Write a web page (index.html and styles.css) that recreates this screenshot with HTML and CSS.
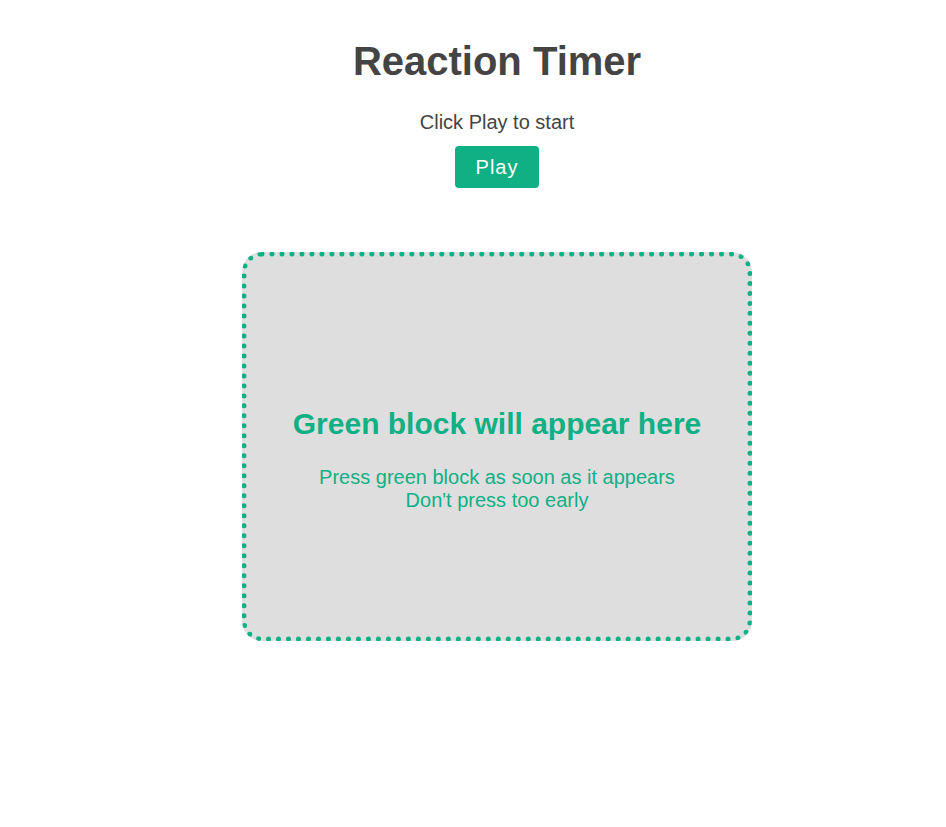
FILE: index.html
```html
<!DOCTYPE html>
<html lang="en">
<head>
<meta charset="utf-8">
<title>Reaction Timer</title>
<link rel="stylesheet" href="styles.css">
</head>
<body>
<main class="app">
  <h1 class="title">Reaction Timer</h1>
  <p class="hint">Click Play to start</p>
  <button class="play-btn" type="button">Play</button>
  <section class="arena">
    <h2 class="arena-title">Green block will appear here</h2>
    <p class="arena-text">Press green block as soon as it appears<br>Don't press too early</p>
  </section>
</main>
</body>
</html>
```

FILE: styles.css
```css
html, body {
  margin: 0;
  padding: 0;
  background: #ffffff;
}

body {
  font-family: "Liberation Sans", Arial, Helvetica, sans-serif;
  color: #444444;
}

.app {
  display: flex;
  flex-direction: column;
  align-items: center;
  padding-left: 48px;
  padding-top: 38px;
}

.title {
  margin: 0;
  font-size: 40px;
  font-weight: bold;
  line-height: 46px;
  color: #444444;
}

.hint {
  margin: 27px 0 12px;
  font-size: 20px;
  line-height: 23px;
}

.play-btn {
  font-family: "Liberation Sans", Arial, Helvetica, sans-serif;
  font-size: 20px;
  line-height: 22px;
  letter-spacing: 1px;
  color: #ffffff;
  background: #0fb084;
  border: none;
  border-radius: 4px;
  padding: 10px 21px;
  cursor: pointer;
}

.arena {
  margin-top: 64px;
  box-sizing: border-box;
  width: 510px;
  height: 389px;
  border: 5px dotted #0fb084;
  border-radius: 20px;
  background: #dedede;
  display: flex;
  flex-direction: column;
  justify-content: center;
  align-items: center;
  padding-top: 26px;
  text-align: center;
  color: #0fb084;
}

.arena-title {
  margin: 0 0 25px;
  font-size: 30px;
  line-height: 34px;
  font-weight: bold;
}

.arena-text {
  margin: 0;
  font-size: 20px;
  line-height: 23px;
}
```
